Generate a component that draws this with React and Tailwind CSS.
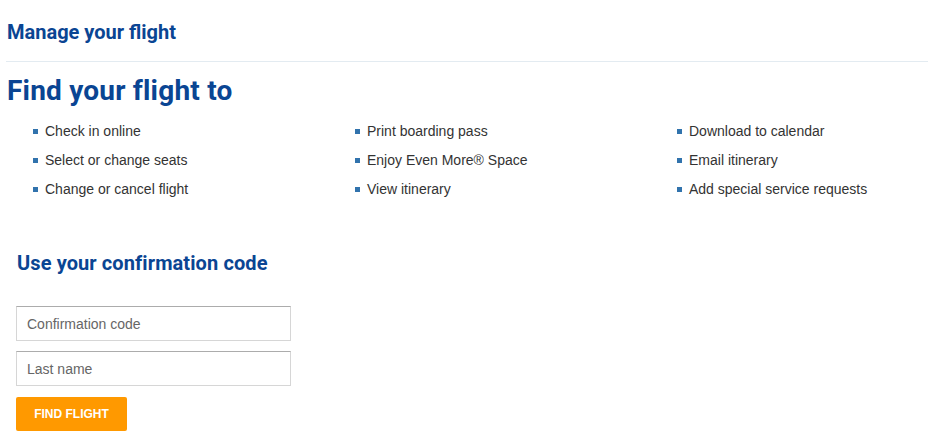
const features = [
  ["Check in online", "Select or change seats", "Change or cancel flight"],
  ["Print boarding pass", "Enjoy Even More® Space", "View itinerary"],
  ["Download to calendar", "Email itinerary", "Add special service requests"],
];

const App = () => {
  return (
    <div className="min-h-screen bg-white font-['Liberation_Sans',Arial,sans-serif]">
      {/* Page header */}
      <div className="pl-[7px] pt-[19px]">
        <h2 className="font-['Roboto',sans-serif] font-bold text-[20px] leading-[26px] text-[#0a4593]">
          Manage your flight
        </h2>
      </div>
      <div className="ml-[6px] mt-[16px] border-t border-[#e3ebf1]"></div>

      {/* Find your flight */}
      <div className="pl-[7px] pt-[11px]">
        <h1 className="font-['Roboto',sans-serif] font-bold text-[28px] leading-[35px] text-[#0a4593] tracking-[0.2px]">
          Find your flight to
        </h1>
      </div>
      <div className="grid grid-cols-[322px_322px_1fr] pl-[33px] pt-[9px]">
        {features.map((col, i) => (
          <ul key={i} className="flex flex-col">
            {col.map((item) => (
              <li
                key={item}
                className="flex items-center h-[29px] text-[14px] text-[#333333]"
              >
                <span className="w-[5px] h-[5px] bg-[#3173ad] mr-[7px] shrink-0"></span>
                {item}
              </li>
            ))}
          </ul>
        ))}
      </div>

      {/* Confirmation code form */}
      <div className="pl-[16px] pt-[46px]">
        <h3 className="pl-[1px] font-['Roboto',sans-serif] font-bold text-[20px] leading-[26px] text-[#0a4593] tracking-[0.1px]">
          Use your confirmation code
        </h3>
        <form className="mt-[30px] flex flex-col w-[275px]">
          <input
            type="text"
            placeholder="Confirmation code"
            className="h-[35px] px-[10px] border border-[#d6d6d6] border-t-[#acacac] text-[14px] text-[#333] placeholder:text-[#666] outline-none"
          />
          <input
            type="text"
            placeholder="Last name"
            className="mt-[10px] h-[35px] px-[10px] border border-[#d6d6d6] border-t-[#acacac] text-[14px] text-[#333] placeholder:text-[#666] outline-none"
          />
          <button
            type="button"
            className="mt-[11px] w-[111px] h-[34px] rounded-[2px] bg-[#ff9900] text-white text-[12px] font-bold"
          >
            FIND FLIGHT
          </button>
        </form>
      </div>
    </div>
  );
};

export default App;
